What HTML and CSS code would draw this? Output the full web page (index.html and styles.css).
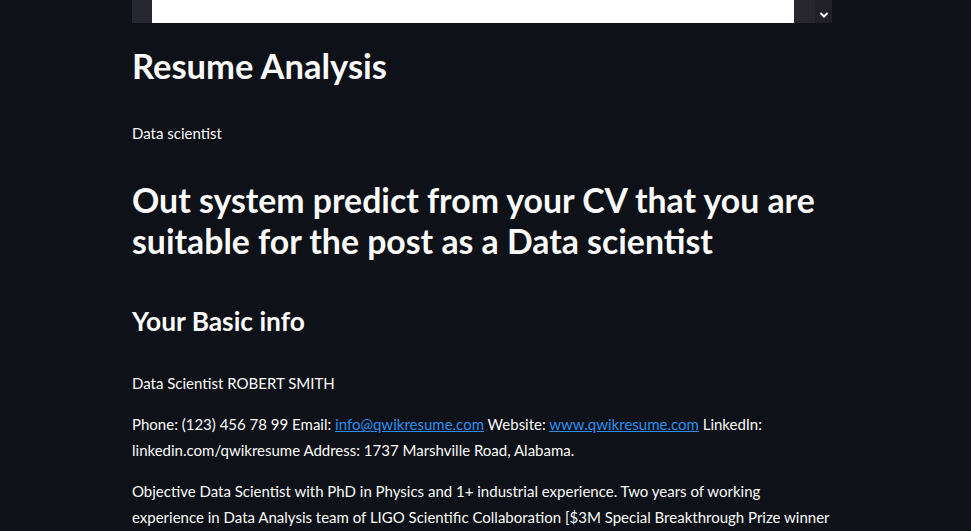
FILE: index.html
```html
<!DOCTYPE html>
<html>
<head>
<meta charset="utf-8">
<link rel="stylesheet" href="styles.css">
</head>
<body>
<div class="main">
  <div class="viewer">
    <div class="viewer-gutter"></div>
    <div class="viewer-page"></div>
    <div class="viewer-track"></div>
    <div class="viewer-scroll">
      <svg width="10" height="8" viewBox="0 0 10 8"><path d="M1.5 2 L5 5.5 L8.5 2" fill="none" stroke="#ffffff" stroke-width="2"/></svg>
    </div>
  </div>
  <h1 class="title">Resume Analysis</h1>
  <p class="text first">Data scientist</p>
  <h2 class="predict">Out system predict from your CV that you are suitable for the post as a Data scientist</h2>
  <h3 class="sub">Your Basic info</h3>
  <p class="text name">Data Scientist ROBERT SMITH</p>
  <p class="text">Phone: (123) 456 78 99 Email: <a href="#">info@qwikresume.com</a> Website: <a href="#">www.qwikresume.com</a> LinkedIn: linkedin.com/qwikresume Address: 1737 Marshville Road, Alabama.</p>
  <p class="text">Objective Data Scientist with PhD in Physics and 1+ industrial experience. Two years of working experience in Data Analysis team of LIGO Scientific Collaboration [$3M Special Breakthrough Prize winner of 2016]. Nine years of experience in data analysis and machine learning projects.</p>
</div>
</body>
</html>
```
FILE: styles.css
```css
html, body {
  margin: 0;
  padding: 0;
  background: #0e1117;
  height: 531px;
  overflow: hidden;
}
body {
  font-family: Lato, "Open Sans", sans-serif;
  color: #fafafa;
}
.main {
  width: 700px;
  margin-left: 132px;
}
.viewer {
  display: flex;
  height: 23px;
}
.viewer-gutter {
  width: 20px;
  background: #262730;
}
.viewer-page {
  flex: 1;
  background: #ffffff;
}
.viewer-track {
  width: 21px;
  background: #27272d;
}
.viewer-scroll {
  width: 17px;
  background: #202026;
  display: flex;
  align-items: flex-end;
  justify-content: center;
  padding-bottom: 4px;
  box-sizing: border-box;
}
.title {
  font-size: 34.5px;
  line-height: 42px;
  font-weight: 700;
  margin: 22px 0 0 0;
}
.text {
  font-size: 15px;
  line-height: 26px;
  margin: 15px 0 0 0;
}
.text.first {
  margin-top: 33px;
}
.predict {
  font-size: 33.8px;
  line-height: 41px;
  font-weight: 700;
  margin: 34px 0 0 0;
}
.sub {
  font-size: 26.3px;
  line-height: 32px;
  font-weight: 700;
  margin: 43px 0 0 0;
}
.text.name {
  margin-top: 33px;
}
a {
  color: #2b8ff0;
  text-decoration: underline;
}
```
